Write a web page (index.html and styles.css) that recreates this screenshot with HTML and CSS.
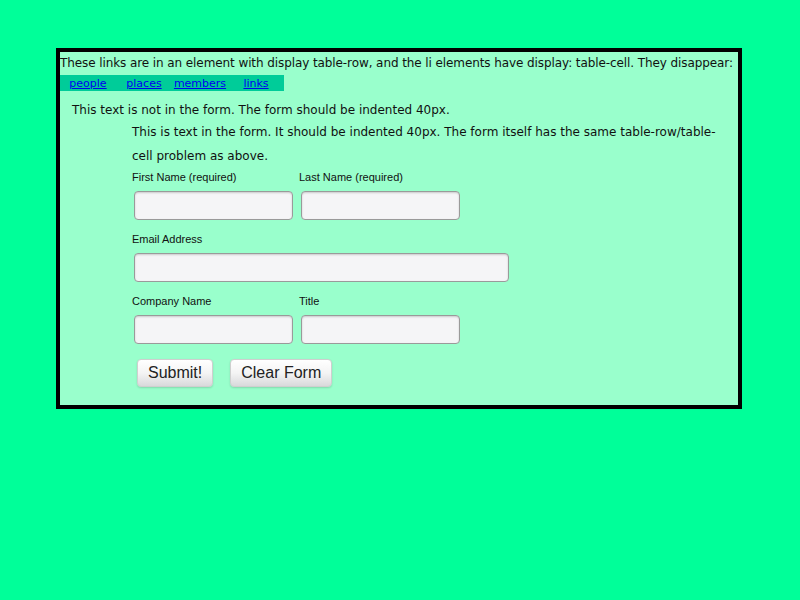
FILE: index.html
```html
<!DOCTYPE html>
<html>
<head>
<meta charset="utf-8">
<title>Table-row test</title>
<link rel="stylesheet" href="styles.css">
</head>
<body>
<div class="box">
  <p class="intro">These links are in an element with display table-row, and the li elements have display: table-cell. They disappear:</p>
  <ul class="nav">
    <li><a href="#">people</a></li>
    <li><a href="#">places</a></li>
    <li><a href="#">members</a></li>
    <li><a href="#">links</a></li>
  </ul>
  <p class="outside">This text is not in the form. The form should be indented 40px.</p>
  <form class="form">
    <p class="form-text">This is text in the form. It should be indented 40px. The form itself has the same table-row/table-cell problem as above.</p>
    <div class="row">
      <label class="field"><span class="label">First Name (required)</span><input type="text" class="input"></label>
      <label class="field"><span class="label">Last Name (required)</span><input type="text" class="input"></label>
    </div>
    <div class="row">
      <label class="field field-wide"><span class="label">Email Address</span><input type="text" class="input input-wide"></label>
    </div>
    <div class="row">
      <label class="field"><span class="label">Company Name</span><input type="text" class="input"></label>
      <label class="field"><span class="label">Title</span><input type="text" class="input"></label>
    </div>
    <div class="buttons">
      <button type="submit" class="btn">Submit!</button>
      <button type="reset" class="btn">Clear Form</button>
    </div>
  </form>
</div>
</body>
</html>
```
FILE: styles.css
```css
html, body {
  margin: 0;
  padding: 0;
  background: #00ff99;
}

body {
  font-family: "DejaVu Sans", Verdana, sans-serif;
  font-size: 12px;
  color: #111;
}

.box {
  box-sizing: border-box;
  width: 686px;
  margin: 48px 0 0 56px;
  border: 4px solid #000;
  background: #99ffcc;
  padding: 4px 0 18px 0;
}

.intro {
  margin: 0;
  line-height: 15px;
  white-space: nowrap;
  letter-spacing: -0.09px;
}

.nav {
  list-style: none;
  margin: 4px 0 0 0;
  padding: 0;
  display: flex;
  width: 224px;
  background: #00cc99;
}

.nav li {
  width: 56px;
  text-align: center;
  font-size: 11px;
  line-height: 15px;
  padding-top: 1px;
}

.nav a {
  color: #0000ee;
  text-decoration: underline;
}

.outside {
  margin: 12px 0 0 12px;
  line-height: 15px;
}

.form {
  margin: 2px 0 0 72px;
}

.form-text {
  margin: 0;
  line-height: 24px;
  padding-right: 16px;
}

.row {
  display: flex;
  margin-top: 2px;
  margin-bottom: 12px;
}

.row + .row {
  margin-top: 0;
}

.field {
  display: flex;
  flex-direction: column;
  width: 167px;
}

.field-wide {
  width: 400px;
}

.label {
  font-family: "Liberation Sans", Arial, sans-serif;
  font-size: 11px;
  line-height: 13px;
  color: #111;
  margin: 1px 0 7px 0;
}

.input {
  box-sizing: border-box;
  width: 159px;
  height: 29px;
  margin: 0 0 0 2px;
  border: 1px solid #9a9a9a;
  border-radius: 4px;
  background: #f5f5f7;
  box-shadow: inset 0 1px 2px rgba(0, 0, 0, 0.18);
  padding: 0 6px;
  font-family: "Liberation Sans", Arial, sans-serif;
  font-size: 13px;
}

.input-wide {
  width: 375px;
}

.buttons {
  display: flex;
  gap: 17px;
  margin: 15px 0 0 5px;
}

.btn {
  box-sizing: border-box;
  height: 28px;
  padding: 0 10px;
  white-space: nowrap;
  border: 1px solid #cfcfcf;
  border-radius: 4px;
  background: linear-gradient(#ffffff 0%, #f4f4f4 50%, #d9d9db 100%);
  box-shadow: 0 1px 2px rgba(0, 0, 0, 0.15);
  font-family: "Liberation Sans", Arial, sans-serif;
  font-size: 16px;
  color: #222;
}
```
